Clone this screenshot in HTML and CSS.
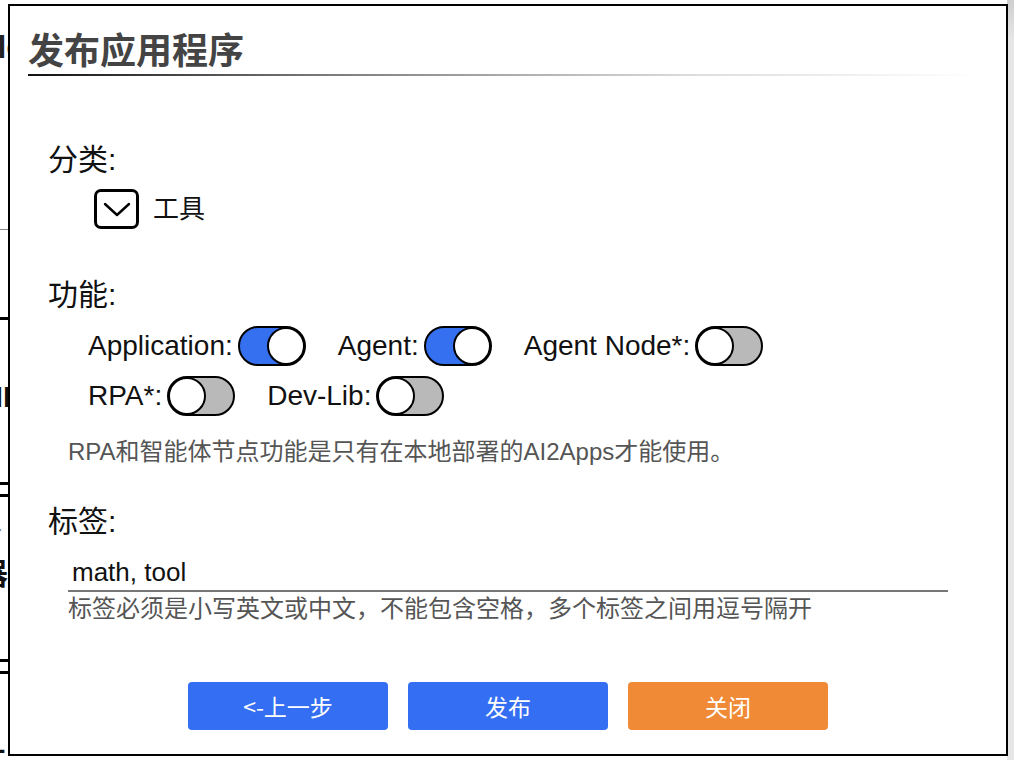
FILE: index.html
```html
<!DOCTYPE html>
<html lang="zh">
<head>
<meta charset="utf-8">
<title>发布应用程序</title>
<link rel="stylesheet" href="styles.css">
</head>
<body>
<div class="page">
  <div class="page-head">
    <div class="page-title"><span class="shift">Mo</span></div>
  </div>
  <div class="cards">
    <div class="card">
      <div class="card-sub"><span class="shift">st</span></div>
      <div class="card-name"><span class="shift">MI:</span></div>
    </div>
    <div class="card">
      <div class="card-sub"><span class="shift">er</span></div>
      <div class="card-name"><span class="shift">器:</span></div>
    </div>
    <div class="card">
      <div class="card-sub"><span class="shift">r:</span></div>
      <div class="card-name"><span class="shift">t+</span></div>
    </div>
  </div>
  <div class="scroll-track"></div>
</div>

<div class="dialog">
  <div class="dlg-head">
    <div class="dlg-title">发布应用程序</div>
    <div class="dlg-rule"></div>
  </div>
  <div class="dlg-body">
    <div class="label label-first">分类:</div>
    <div class="check-row">
      <span class="checkbox">
        <svg width="30" height="20" viewBox="0 0 30 20"><polyline points="3,4 15,15 27,4" fill="none" stroke="#000" stroke-width="2.4" stroke-linecap="round" stroke-linejoin="round"/></svg>
      </span>
      <span class="check-text">工具</span>
    </div>

    <div class="label label-gap">功能:</div>
    <div class="toggle-row row-one">
      <div class="item"><span class="item-label">Application:</span><span class="toggle on"><span class="knob"></span></span></div>
      <div class="item"><span class="item-label">Agent:</span><span class="toggle on"><span class="knob"></span></span></div>
      <div class="item"><span class="item-label">Agent Node*:</span><span class="toggle"><span class="knob"></span></span></div>
    </div>
    <div class="toggle-row row-two">
      <div class="item"><span class="item-label">RPA*:</span><span class="toggle"><span class="knob"></span></span></div>
      <div class="item"><span class="item-label">Dev-Lib:</span><span class="toggle"><span class="knob"></span></span></div>
    </div>
    <div class="hint hint-rpa">RPA和智能体节点功能是只有在本地部署的AI2Apps才能使用。</div>

    <div class="label label-tags">标签:</div>
    <div class="tag-input">math, tool</div>
    <div class="hint hint-tags">标签必须是小写英文或中文，不能包含空格，多个标签之间用逗号隔开</div>
  </div>
  <div class="dlg-buttons">
    <button class="btn btn-blue">&lt;-上一步</button>
    <button class="btn btn-blue">发布</button>
    <button class="btn btn-orange">关闭</button>
  </div>
</div>
</body>
</html>
```

FILE: styles.css
```css
html, body {
  margin: 0;
  padding: 0;
  background: #fff;
  font-family: "Liberation Sans", "Noto Sans CJK SC", Arial, sans-serif;
  color: #111;
}

.page {
  position: relative;
  width: 1014px;
  height: 760px;
  overflow: hidden;
}

.page-head {
  height: 229px;
  border-bottom: 1px solid #888;
}

.page-title {
  padding-top: 28px;
  font-size: 34px;
  line-height: 36px;
  font-weight: bold;
  color: #222;
}

.shift {
  display: inline-block;
  margin-left: -22px;
}

.cards {
  padding-top: 87px;
  display: flex;
  flex-direction: column;
  gap: 9px;
}

.card {
  height: 162px;
  border-top: 3px solid #000;
  border-bottom: 3px solid #000;
}

.card-sub {
  margin-top: 22px;
  font-size: 26px;
  line-height: 30px;
  color: #777;
}

.card-name {
  margin-top: 8px;
  font-size: 30px;
  line-height: 34px;
  font-weight: bold;
  color: #111;
}

.scroll-track {
  position: absolute;
  top: 0;
  right: 0;
  width: 7px;
  height: 760px;
  background: linear-gradient(to bottom, #cfcfcf 0, #e6e6e6 40px, #e6e6e6 100%);
}

/* dialog overlay */
.dialog {
  position: fixed;
  left: 8px;
  top: 4px;
  width: 1000px;
  height: 752px;
  box-sizing: border-box;
  border: 2px solid #000;
  background: #fff;
  display: flex;
  flex-direction: column;
}

.dlg-head {
  padding: 20px 0 0 18px;
}

.dlg-title {
  font-family: "Noto Sans CJK SC", sans-serif;
  font-size: 36px;
  line-height: 44px;
  font-weight: bold;
  color: #444;
}

.dlg-rule {
  margin-top: 4px;
  width: 952px;
  height: 2px;
  background: linear-gradient(to right, #111 0%, #777 30%, #ddd 70%, rgba(255,255,255,0) 100%);
}

.dlg-body {
  padding-left: 38px;
  display: flex;
  flex-direction: column;
  align-items: flex-start;
}

.label {
  font-family: "Liberation Sans", "Noto Sans CJK SC", sans-serif;
  font-size: 30px;
  line-height: 40px;
  height: 40px;
  color: #111;
}

.label-first { margin-top: 64px; }
.label-gap { margin-top: 46px; }
.label-tags { margin-top: 35px; }

.check-row {
  margin-top: 9px;
  margin-left: 46px;
  display: flex;
  align-items: center;
  gap: 14px;
  height: 40px;
}

.checkbox {
  width: 45px;
  height: 40px;
  box-sizing: border-box;
  border: 3px solid #000;
  border-radius: 7px;
  display: flex;
  align-items: center;
  justify-content: center;
}

.checkbox svg { display: block; margin-top: 2px; }

.check-text {
  font-size: 26px;
  line-height: 40px;
}

.toggle-row {
  margin-left: 40px;
  display: flex;
  align-items: center;
  gap: 32px;
  height: 42px;
}

.row-one { margin-top: 10px; }
.row-two { margin-top: 8px; }

.item {
  display: flex;
  align-items: center;
  gap: 5px;
}

.item-label {
  font-size: 28px;
  line-height: 42px;
  color: #111;
}

.toggle {
  position: relative;
  width: 68px;
  height: 40px;
  box-sizing: border-box;
  border: 2px solid #000;
  border-radius: 20px;
  background: #b9b9b9;
}

.toggle.on {
  background: #3470f0;
}

.knob {
  position: absolute;
  top: -1px;
  left: -1px;
  width: 38px;
  height: 38px;
  box-sizing: border-box;
  border: 2px solid #000;
  border-radius: 50%;
  background: #fff;
}

.toggle.on .knob {
  left: auto;
  right: -1px;
}

.hint {
  margin-left: 20px;
  font-size: 24px;
  line-height: 30px;
  color: #555;
}

.hint-rpa { margin-top: 20px; }
.hint-tags { margin-top: 2px; }

.tag-input {
  margin-top: 10px;
  margin-left: 20px;
  width: 880px;
  height: 40px;
  box-sizing: border-box;
  border-bottom: 2px solid #777;
  padding-left: 4px;
  font-size: 26px;
  line-height: 40px;
  color: #111;
}

.dlg-buttons {
  margin-top: 58px;
  display: flex;
  justify-content: center;
  gap: 20px;
}

.btn {
  width: 200px;
  height: 48px;
  border: none;
  border-radius: 4px;
  color: #fff;
  font-family: "Noto Sans CJK SC", sans-serif;
  font-size: 23px;
  padding: 0;
}

.btn-blue { background: #346ef2; }
.btn-orange { background: #f08a36; }
```
